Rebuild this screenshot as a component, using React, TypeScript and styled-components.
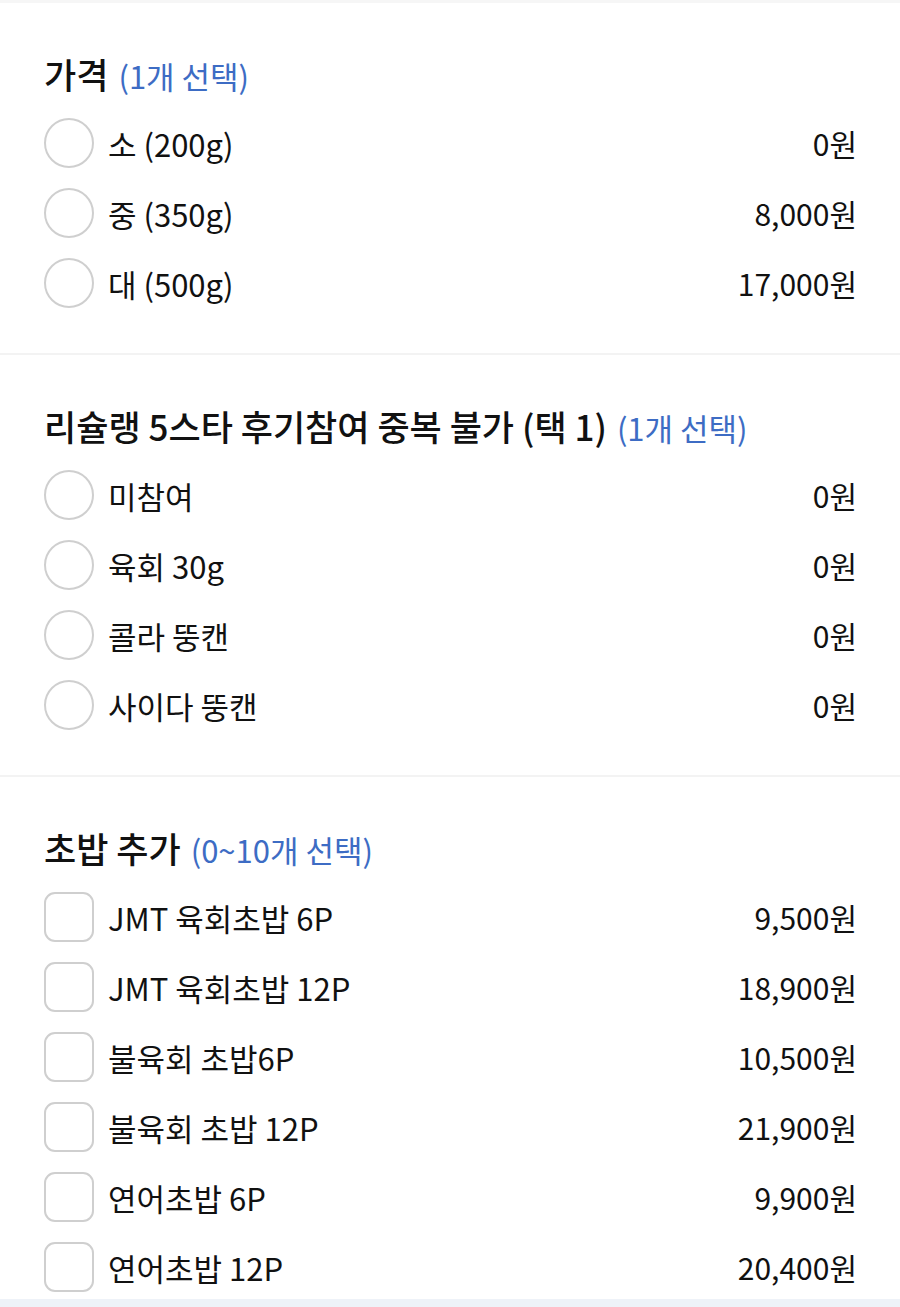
import styled, { createGlobalStyle } from 'styled-components';

const GlobalStyle = createGlobalStyle`
  html, body {
    margin: 0;
    padding: 0;
    background: #eef2f8;
  }
  body {
    font-family: 'Noto Sans CJK KR', 'Noto Sans', sans-serif;
    color: #111;
  }
`;

interface Option {
  name: string;
  price: number;
}

interface OptionGroup {
  title: string;
  rule: string;
  multiple: boolean;
  options: Option[];
}

const groups: OptionGroup[] = [
  {
    title: '가격',
    rule: '(1개 선택)',
    multiple: false,
    options: [
      { name: '소 (200g)', price: 0 },
      { name: '중 (350g)', price: 8000 },
      { name: '대 (500g)', price: 17000 },
    ],
  },
  {
    title: '리슐랭 5스타 후기참여 중복 불가 (택 1)',
    rule: '(1개 선택)',
    multiple: false,
    options: [
      { name: '미참여', price: 0 },
      { name: '육회 30g', price: 0 },
      { name: '콜라 뚱캔', price: 0 },
      { name: '사이다 뚱캔', price: 0 },
    ],
  },
  {
    title: '초밥 추가',
    rule: '(0~10개 선택)',
    multiple: true,
    options: [
      { name: 'JMT 육회초밥 6P', price: 9500 },
      { name: 'JMT 육회초밥 12P', price: 18900 },
      { name: '불육회 초밥6P', price: 10500 },
      { name: '불육회 초밥 12P', price: 21900 },
      { name: '연어초밥 6P', price: 9900 },
      { name: '연어초밥 12P', price: 20400 },
    ],
  },
];

const Page = styled.div`
  padding-top: 3px;
  background: #f6f6f6;
`;

// sections sit on a light grey so the 2px gap between them reads as a divider
const Sections = styled.div`
  background: #f3f3f3;
  display: flex;
  flex-direction: column;
  gap: 2px;
`;

const Section = styled.section<{ $last?: boolean }>`
  background: #fff;
  padding: 46px 43px ${(p) => (p.$last ? '7px' : '45px')} 44px;
`;

const Title = styled.h3`
  margin: 0 0 17px;
  font-size: 35px;
  font-weight: 500;
  line-height: 50px;
  color: #111;
  display: flex;
  align-items: baseline;
  gap: 10px;
`;

const Rule = styled.span`
  font-size: 31px;
  font-weight: 400;
  color: #3d6cc4;
`;

const List = styled.ul`
  list-style: none;
  margin: 0;
  padding: 0;
  display: flex;
  flex-direction: column;
  gap: 20px;
`;

const Row = styled.li`
  display: flex;
  align-items: center;
  height: 50px;
`;

const Mark = styled.span<{ $square: boolean }>`
  width: 50px;
  height: 50px;
  box-sizing: border-box;
  border: 2px solid #cfcfcf;
  border-radius: ${(p) => (p.$square ? '11px' : '50%')};
  flex-shrink: 0;
  margin-right: 14px;
`;

const Name = styled.span`
  flex: 1;
  font-size: 31px;
  color: #111;
`;

const Price = styled.span`
  font-size: 30px;
  color: #111;
`;

const won = (n: number) => `${n.toLocaleString('ko-KR')}원`;

export default function App() {
  return (
    <Page>
      <GlobalStyle />
      <Sections>
        {groups.map((g, i) => (
          <Section key={g.title} $last={i === groups.length - 1}>
            <Title>
              {g.title}
              <Rule>{g.rule}</Rule>
            </Title>
            <List>
              {g.options.map((o) => (
                <Row key={o.name}>
                  <Mark $square={g.multiple} />
                  <Name>{o.name}</Name>
                  <Price>{won(o.price)}</Price>
                </Row>
              ))}
            </List>
          </Section>
        ))}
      </Sections>
    </Page>
  );
}
